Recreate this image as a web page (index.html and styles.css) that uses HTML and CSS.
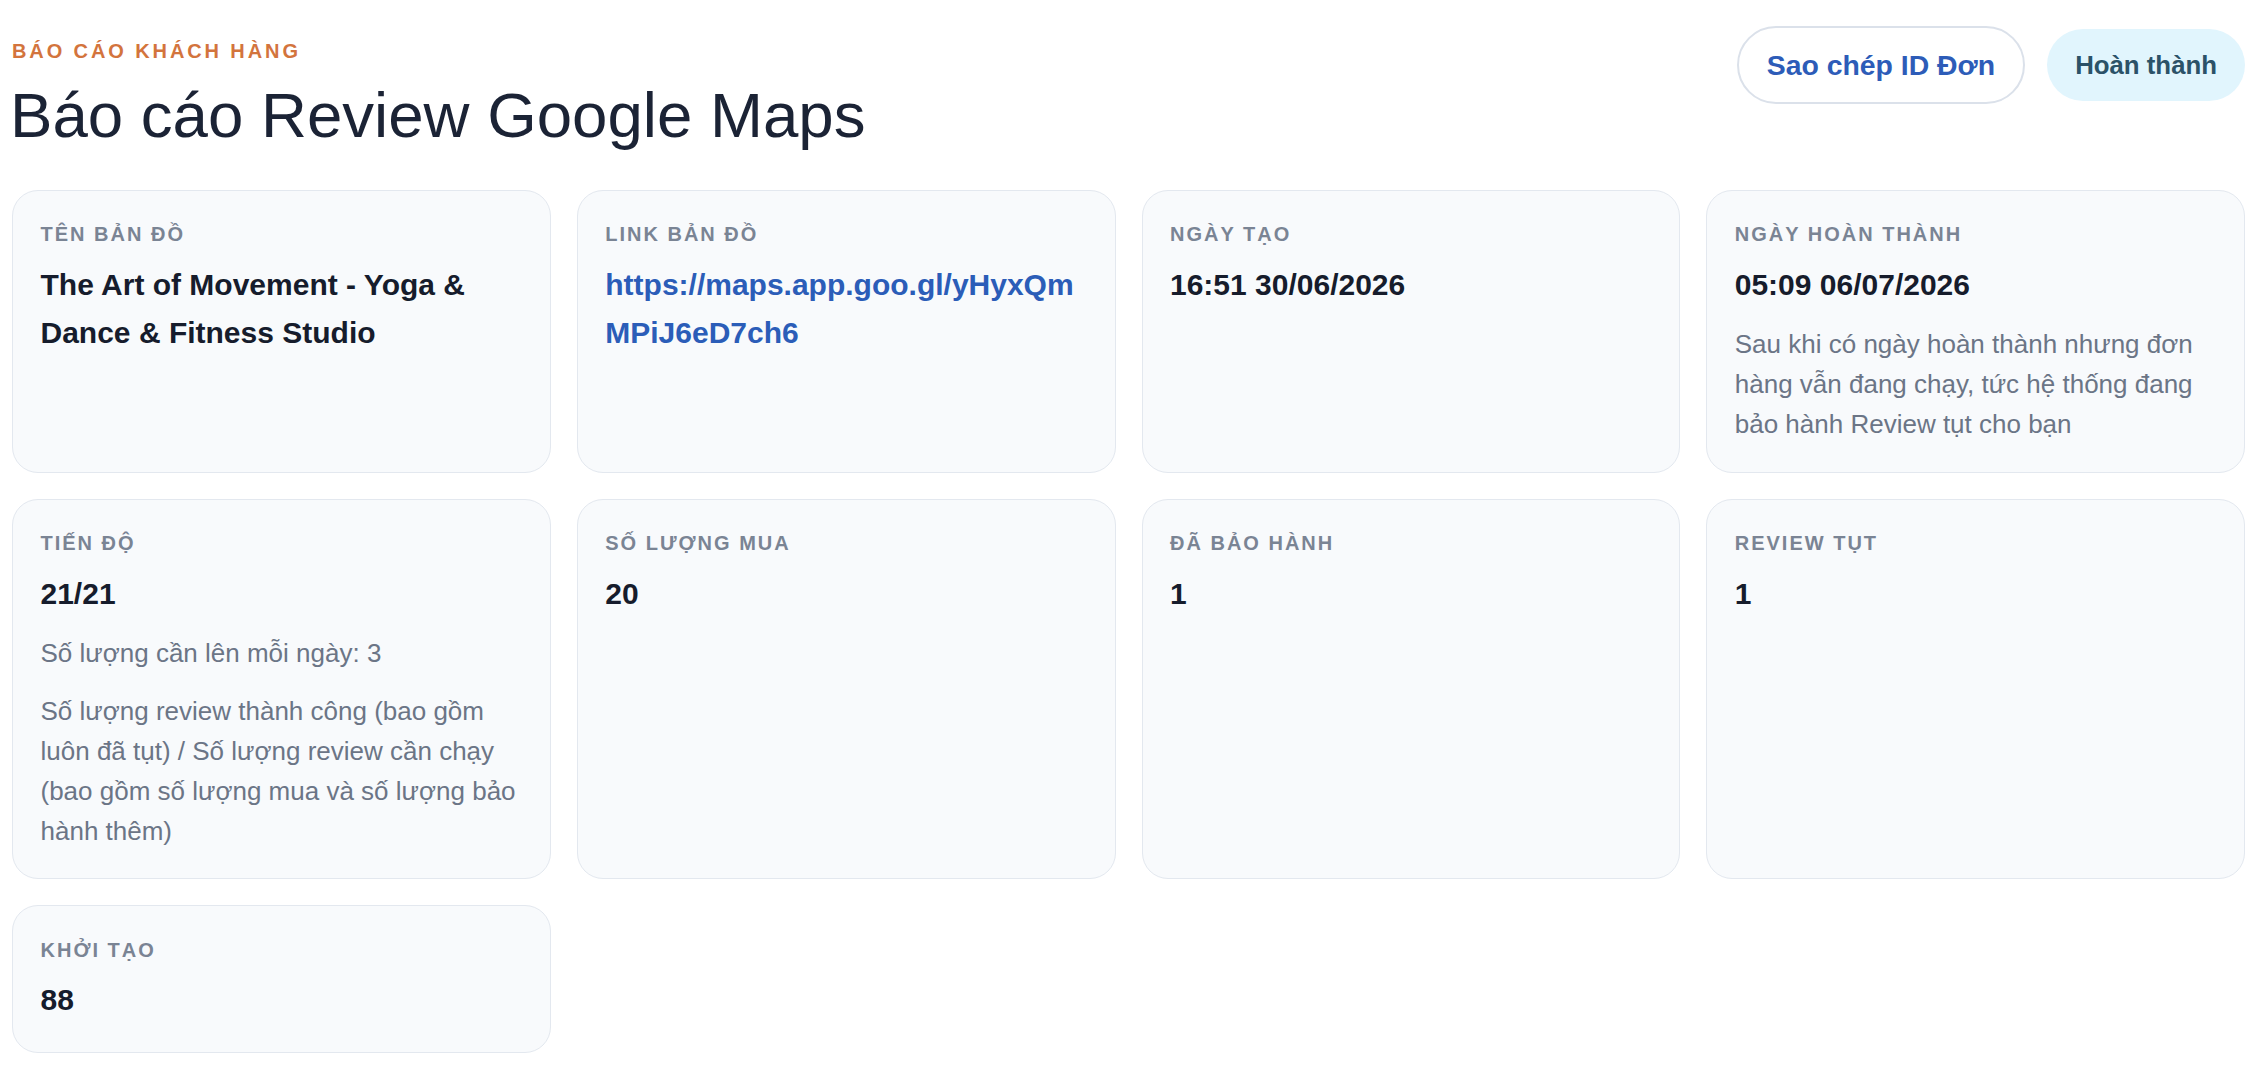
FILE: index.html
```html
<!DOCTYPE html>
<html lang="vi">
<head>
    <meta charset="UTF-8">
    <meta name="viewport" content="width=device-width, initial-scale=1.0">
    <title>Báo cáo Review Google Maps</title>
    <link rel="stylesheet" href="styles.css">
</head>
<body>

<div class="page">
    <!-- Header -->
    <div class="header">
        <div class="heading">
            <div class="eyebrow">BÁO CÁO KHÁCH HÀNG</div>
            <h1 class="title">Báo cáo Review Google Maps</h1>
        </div>
        <div class="actions">
            <button class="btn btn-outline" type="button">Sao chép ID Đơn</button>
            <span class="status">Hoàn thành</span>
        </div>
    </div>

    <!-- Report cards -->
    <div class="grid">
        <div class="card">
            <div class="label">TÊN BẢN ĐỒ</div>
            <div class="value">The Art of Movement - Yoga &amp; Dance &amp; Fitness Studio</div>
        </div>
        <div class="card">
            <div class="label">LINK BẢN ĐỒ</div>
            <a class="value link" href="#">https://maps.app.goo.gl/yHyxQmMPiJ6eD7ch6</a>
        </div>
        <div class="card">
            <div class="label">NGÀY TẠO</div>
            <div class="value">16:51 30/06/2026</div>
        </div>
        <div class="card">
            <div class="label">NGÀY HOÀN THÀNH</div>
            <div class="value">05:09 06/07/2026</div>
            <p class="desc">Sau khi có ngày hoàn thành nhưng đơn hàng vẫn đang chạy, tức hệ thống đang bảo hành Review tụt cho bạn</p>
        </div>

        <div class="card">
            <div class="label">TIẾN ĐỘ</div>
            <div class="value">21/21</div>
            <p class="desc">Số lượng cần lên mỗi ngày: 3</p>
            <p class="desc">Số lượng review thành công (bao gồm luôn đã tụt) / Số lượng review cần chạy (bao gồm số lượng mua và số lượng bảo hành thêm)</p>
        </div>
        <div class="card">
            <div class="label">SỐ LƯỢNG MUA</div>
            <div class="value">20</div>
        </div>
        <div class="card">
            <div class="label">ĐÃ BẢO HÀNH</div>
            <div class="value">1</div>
        </div>
        <div class="card">
            <div class="label">REVIEW TỤT</div>
            <div class="value">1</div>
        </div>

        <div class="card">
            <div class="label">KHỞI TẠO</div>
            <div class="value">88</div>
        </div>
    </div>
</div>

</body>
</html>
```

FILE: styles.css
```css
/* Base */
body {
    margin: 0;
    background-color: #fff;
    font-family: "Liberation Sans", Arial, sans-serif;
    color: #151b2b;
}

.page {
    padding: 26px 23px 0 12px;
}

/* Header */
.header {
    display: flex;
    justify-content: space-between;
    align-items: flex-start;
}

.eyebrow {
    margin-top: 11px;
    font-size: 20px;
    line-height: 28px;
    font-weight: bold;
    letter-spacing: 2.9px;
    color: #d3743d;
}

.title {
    margin: 12.5px 0 0 -2px;
    font-size: 63.6px;
    line-height: 74px;
    font-weight: normal;
    color: #1b2335;
}

.actions {
    display: flex;
    align-items: center;
    gap: 22px;
}

.btn {
    font-family: inherit;
    cursor: pointer;
}

.btn-outline {
    padding: 21px 28px;
    border: 2px solid #dbe1ea;
    border-radius: 40px;
    background-color: #fff;
    font-size: 28.4px;
    line-height: 32px;
    font-weight: bold;
    color: #2d5cb8;
}

.status {
    padding: 20px 28px;
    border-radius: 36px;
    background-color: #e1f5fd;
    font-size: 25.8px;
    line-height: 32px;
    font-weight: bold;
    color: #2b5268;
}

/* Cards */
.grid {
    display: grid;
    grid-template-columns: repeat(4, 1fr);
    gap: 26px;
    margin-top: 38px;
}

.card {
    display: flex;
    flex-direction: column;
    align-items: flex-start;
    padding: 27.5px;
    border: 1.5px solid #e3e8ef;
    border-radius: 26px;
    background-color: #f8fafc;
}

.label {
    font-size: 20px;
    line-height: 32px;
    font-weight: bold;
    letter-spacing: 2px;
    color: #7a8494;
}

.value {
    margin-top: 10.5px;
    font-size: 30px;
    line-height: 48px;
    font-weight: bold;
    color: #161c2c;
}

.link {
    color: #2b5db8;
    text-decoration: none;
    word-break: break-all;
}

.desc {
    margin: 15.5px 0 0;
    font-size: 26px;
    line-height: 40px;
    color: #6b7586;
}

.desc + .desc {
    margin-top: 17.6px;
}
```
